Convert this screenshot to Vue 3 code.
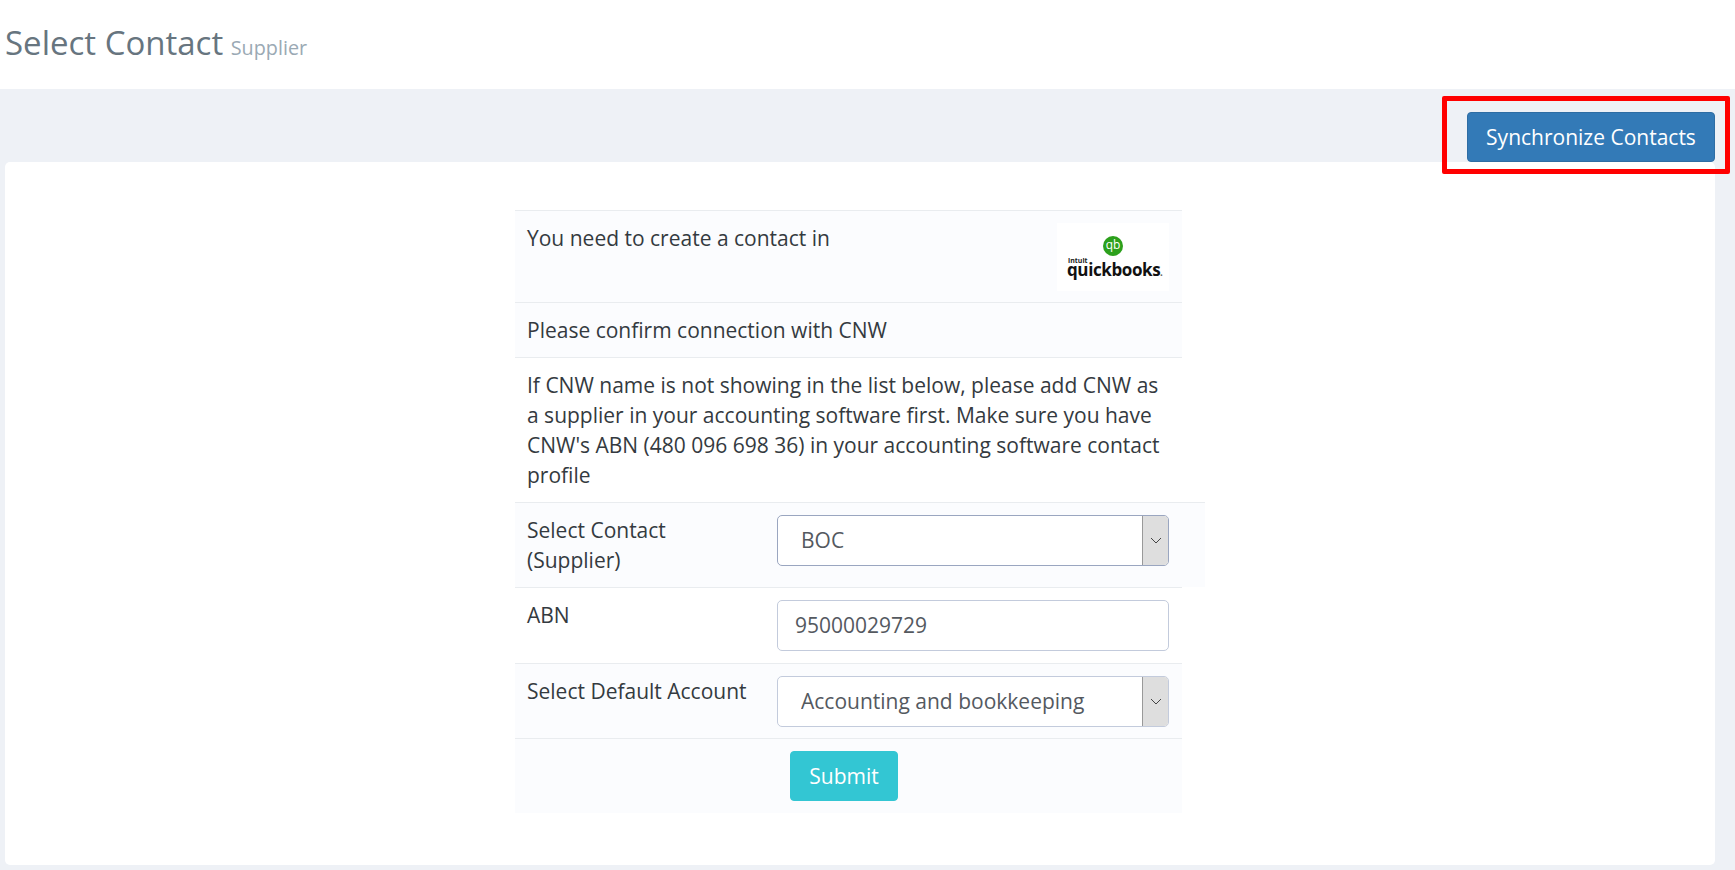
<template>
  <div class="page">
    <header class="page-header">
      <h1 class="page-title">Select Contact <small>Supplier</small></h1>
    </header>
    <main class="page-body">
      <div class="toolbar">
        <button type="button" class="btn btn-sync">Synchronize Contacts</button>
        <span class="highlight"></span>
      </div>
      <section class="card">
        <div class="contact-table">
          <div class="row row-tint row-intro">
            <span>You need to create a contact in</span>
            <div class="qb-logo">
              <span class="qb-mark">qb</span>
              <span class="qb-intuit">intuit</span>
              <span class="qb-word">quickbooks<b>.</b></span>
            </div>
          </div>
          <div class="row row-tint">Please confirm connection with CNW</div>
          <div class="row">
            If CNW name is not showing in the list below, please add CNW as a supplier in your
            accounting software first. Make sure you have CNW's ABN (480 096 698 36) in your
            accounting software contact profile
          </div>
          <div class="row row-tint row-field row-wide">
            <label>Select Contact (Supplier)</label>
            <div class="select-wrap select-dark">
              <select class="control" v-model="contact">
                <option v-for="c in contacts" :key="c">{{ c }}</option>
              </select>
              <span class="select-arrow">
                <svg width="12" height="7" viewBox="0 0 12 7"><path d="M1 1l5 5 5-5" fill="none" stroke="#444" stroke-width="1" /></svg>
              </span>
            </div>
          </div>
          <div class="row row-field">
            <label>ABN</label>
            <input class="control control-input" v-model="abn" />
          </div>
          <div class="row row-tint row-field row-short">
            <label>Select Default Account</label>
            <div class="select-wrap">
              <select class="control" v-model="account">
                <option v-for="a in accounts" :key="a">{{ a }}</option>
              </select>
              <span class="select-arrow">
                <svg width="12" height="7" viewBox="0 0 12 7"><path d="M1 1l5 5 5-5" fill="none" stroke="#444" stroke-width="1" /></svg>
              </span>
            </div>
          </div>
          <div class="row row-tint row-submit">
            <button type="button" class="btn btn-submit">Submit</button>
          </div>
        </div>
      </section>
    </main>
  </div>
</template>

<script setup>
import { ref } from 'vue'

const contacts = ['BOC', 'CNW']
const accounts = ['Accounting and bookkeeping', 'Office expenses']

const contact = ref('BOC')
const account = ref('Accounting and bookkeeping')
const abn = ref('95000029729')
</script>

<style>
html,
body {
  margin: 0;
  background: #eef1f6;
}
</style>

<style scoped>
.page {
  height: 870px;
  overflow: hidden;
  font-family: "Open Sans", "Noto Sans", sans-serif;
  font-size: 21px;
  line-height: 30px;
  color: #343a40;
}

.page-header {
  height: 89px;
  background: #fff;
  padding-left: 5px;
  box-sizing: border-box;
}

.page-title {
  margin: 0;
  padding-top: 21px;
  font-size: 33px;
  line-height: 44px;
  font-weight: 400;
  color: #67757f;
}

.page-title small {
  font-size: 19.8px;
  margin-left: -1px;
  color: #9aa9b4;
}

.page-body {
  padding: 23px 20px 0 5px;
}

.toolbar {
  position: relative;
  display: flex;
  justify-content: flex-end;
  height: 50px;
}

.highlight {
  position: absolute;
  top: -16px;
  right: -15px;
  width: 288px;
  height: 78px;
  box-sizing: border-box;
  border: 5px solid #f00;
  border-radius: 2px;
  pointer-events: none;
}

.btn {
  border: 1px solid transparent;
  border-radius: 4px;
  font: inherit;
  color: #fff;
  cursor: pointer;
}

.btn-sync {
  width: 248px;
  height: 50px;
  padding: 0;
  background: #337ab7;
  border-color: #2e6da4;
}

.card {
  height: 703px;
  box-sizing: border-box;
  padding: 48px 0 0 510px;
  background: #fff;
  border-radius: 5px;
}

.contact-table {
  width: 667px;
}

.row {
  box-sizing: border-box;
  padding: 12px;
  border-top: 1px solid #e9ecef;
}

.row-tint {
  background: #fbfcfe;
}

.row-intro {
  display: flex;
  justify-content: space-between;
  height: 92px;
  padding-right: 13px;
}

.row-field {
  display: grid;
  grid-template-columns: 250px 392px;
  align-items: start;
}

.row-field label {
  padding-right: 20px;
}

.row-wide {
  width: 690px;
}

.row-wide.row-field {
  height: 85px;
}

.row-short.row-field {
  height: 75px;
}

.row-submit {
  height: 75px;
  padding-left: 275px;
}

.qb-logo {
  width: 112px;
  height: 68px;
  background: #fff;
  position: relative;
  text-align: center;
}

.qb-mark {
  position: absolute;
  top: 13px;
  left: 46px;
  width: 20px;
  height: 20px;
  border-radius: 50%;
  background: #2ca01c;
  color: #fff;
  font-size: 12px;
  line-height: 18px;
  font-weight: 400;
}

.qb-intuit {
  position: absolute;
  top: 35px;
  left: 11px;
  font-size: 7px;
  line-height: 6px;
  font-weight: 700;
  color: #222;
}

.qb-word {
  position: absolute;
  top: 41px;
  left: 10px;
  font-size: 17px;
  line-height: 12px;
  font-weight: 700;
  letter-spacing: -0.4px;
  color: #111;
  white-space: nowrap;
}

.qb-word b {
  font-size: 8px;
  color: #666;
}

.control {
  display: block;
  width: 392px;
  height: 51px;
  box-sizing: border-box;
  border: 1px solid #c3cbdc;
  border-radius: 5px;
  background: #fff;
  font: inherit;
  color: #54595f;
  outline: none;
}

select.control {
  appearance: none;
  padding: 0 48px 1px 23px;
}

.control-input {
  padding: 0 17px 1px;
}

.select-wrap {
  position: relative;
  width: 392px;
}

.select-dark .control {
  border-color: #9aa6c0;
}

.select-arrow {
  position: absolute;
  top: 1px;
  right: 1px;
  bottom: 1px;
  width: 26px;
  display: flex;
  align-items: center;
  justify-content: center;
  box-sizing: border-box;
  background: #dedede;
  border-left: 1px solid #999;
  border-radius: 0 4px 4px 0;
}

.btn-submit {
  width: 108px;
  height: 50px;
  padding: 0;
  background: #33c6d3;
  border-color: #33c6d3;
}
</style>
